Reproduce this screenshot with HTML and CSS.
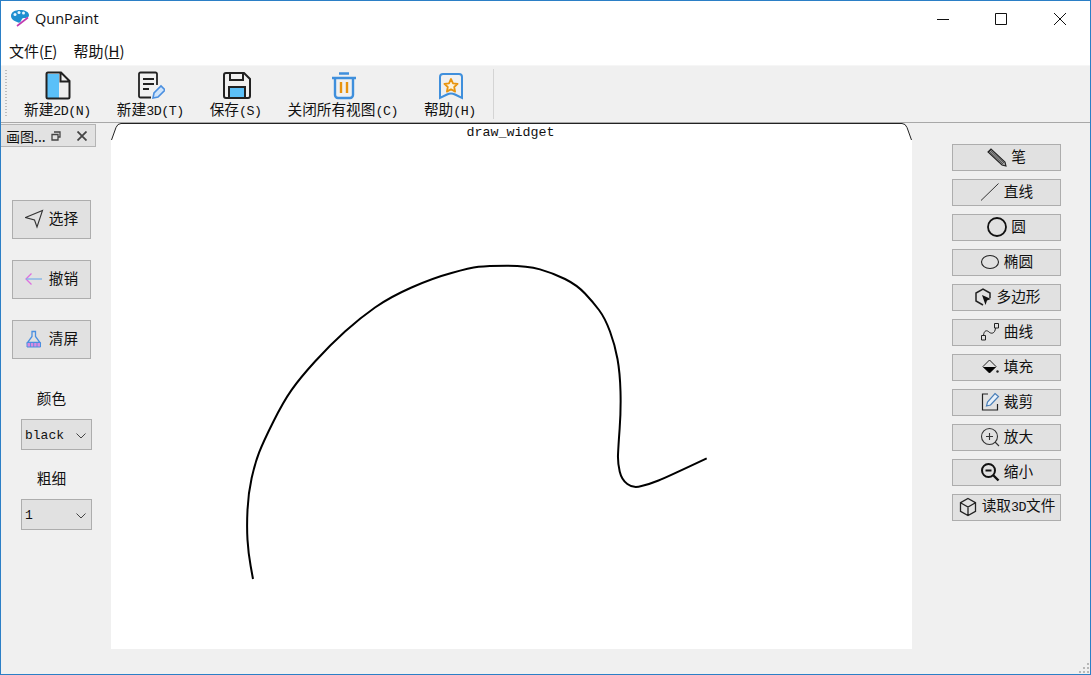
FILE: index.html
```html
<!DOCTYPE html>
<html lang="zh">
<head>
<meta charset="utf-8">
<title>QunPaint</title>
<link rel="stylesheet" href="styles.css">
</head>
<body>
<div class="window">
  <header class="titlebar">
    <svg class="logo" width="20" height="18" viewBox="0 0 20 18">
      <path d="M1 7C1 3 5 1 10 1s9 2 9 5c0 3-3 3-5 3-2 0-2 1-3 3-1 2-2 2-4 1C4 12 1 10 1 7z" fill="#1f8fd0"/>
      <circle cx="5" cy="5.500" r="1.500" fill="#e8f6ff"/><circle cx="9" cy="3.500" r="1.500" fill="#e8f6ff"/><circle cx="13.500" cy="4" r="1.500" fill="#e8f6ff"/>
      <path d="M18 8.500L7 17" stroke="#c23bb0" stroke-width="1.600"/>
    </svg>
    <span class="app-name">QunPaint</span>
    <div class="win-controls">
      <span class="win-btn"><svg width="12" height="12" viewBox="0 0 12 12"><path d="M0 6.500h12" stroke="#111" fill="none"/></svg></span>
      <span class="win-btn"><svg width="12" height="12" viewBox="0 0 12 12"><path d="M.5.500h11v11H.5z" stroke="#111" fill="none"/></svg></span>
      <span class="win-btn"><svg width="12" height="12" viewBox="0 0 12 12"><path d="M0 0l12 12M12 0L0 12" stroke="#111" fill="none"/></svg></span>
    </div>
  </header>

  <nav class="menubar">
    <span class="menu-item">文件(<u>F</u>)</span>
    <span class="menu-item">帮助(<u>H</u>)</span>
  </nav>

  <div class="toolbar">
    <span class="grip"></span>
    <div class="tool">
      <svg width="28" height="29" viewBox="0 0 28 29">
        <path d="M3 3h12v25H5a2 2 0 0 1-2-2z" fill="#5bc0f8"/>
        <path d="M4 1.500h13l8.500 8.500v16a1.500 1.500 0 0 1-1.500 1.500H4A1.500 1.500 0 0 1 2.500 26V3A1.500 1.500 0 0 1 4 1.500zM16.500 2v8.500H25" fill="none" stroke="#222" stroke-width="2"/>
      </svg>
      <span class="tool-label">新建<span class="latin">2D(N)</span></span>
    </div>
    <div class="tool">
      <svg width="28" height="29" viewBox="0 0 28 29">
        <path d="M20 14V3a1.500 1.500 0 0 0-1.500-1.500h-15A1.500 1.500 0 0 0 2 3v22a1.500 1.500 0 0 0 1.500 1.500H14" fill="none" stroke="#222" stroke-width="1.800"/>
        <path d="M6 8h11M6 13h11M6 18h6" stroke="#222" stroke-width="1.800"/>
        <path d="M16 27l1-5 7-7 4 4-7 7z" fill="#cfe4fb" stroke="#4a8fe0" stroke-width="1.600"/>
      </svg>
      <span class="tool-label">新建<span class="latin">3D(T)</span></span>
    </div>
    <div class="tool">
      <svg width="28" height="29" viewBox="0 0 28 29">
        <path d="M3 2h18l6 6v17a2 2 0 0 1-2 2H3a2 2 0 0 1-2-2V4a2 2 0 0 1 2-2z" fill="none" stroke="#222" stroke-width="2"/>
        <path d="M7 2v7h13V2" fill="none" stroke="#222" stroke-width="2"/>
        <path d="M6 16h16v11H6z" fill="#5bc0f8" stroke="#222" stroke-width="2"/>
      </svg>
      <span class="tool-label">保存<span class="latin">(S)</span></span>
    </div>
    <div class="tool">
      <svg width="28" height="29" viewBox="0 0 28 29">
        <path d="M2 7h24M9 2.500h10" stroke="#3f8fdc" stroke-width="2.400" fill="none"/>
        <path d="M5 7v17a3 3 0 0 0 3 3h12a3 3 0 0 0 3-3V7" stroke="#3f8fdc" stroke-width="2.400" fill="none"/>
        <path d="M11 11v11M17 11v11" stroke="#e8940f" stroke-width="2.400"/>
      </svg>
      <span class="tool-label">关闭所有视图<span class="latin">(C)</span></span>
    </div>
    <div class="tool">
      <svg width="28" height="29" viewBox="0 0 28 29">
        <path d="M6 3h16a3 3 0 0 1 3 3v21l-7-3.500a9 9 0 0 0-8 0L3 27V6a3 3 0 0 1 3-3z" fill="none" stroke="#3f8fdc" stroke-width="2"/>
        <path d="M14 8l2 4.300 4.600.6-3.400 3.100.9 4.600-4.100-2.300-4.100 2.300.9-4.600-3.400-3.100 4.600-.6z" fill="#fdf3dc" stroke="#e8940f" stroke-width="1.800" stroke-linejoin="round"/>
      </svg>
      <span class="tool-label">帮助<span class="latin">(H)</span></span>
    </div>
    <span class="tool-sep"></span>
  </div>

  <main class="workspace">
    <aside class="dock">
      <div class="dock-tab">
        <span class="dock-title">画图...</span>
        <svg class="dock-float" width="10" height="10" viewBox="0 0 10 10"><path d="M3 1h6v5H7M1 3.500h6v5.500H1z" fill="none" stroke="#444" stroke-width="1.300"/></svg>
        <svg class="dock-close" width="10" height="10" viewBox="0 0 10 10"><path d="M.5.500l9 9M9.500.500l-9 9" stroke="#444" stroke-width="1.800"/></svg>
      </div>
      <div class="action-list">
        <button class="btn action">
          <svg width="20" height="20" viewBox="0 0 20 20"><path d="M.5 8.500L17.500 1.500 12 18l-2.500-7z" fill="none" stroke="#333" stroke-width="1.100"/></svg>
          <span class="btn-text">选择</span>
        </button>
        <button class="btn action">
          <svg width="20" height="20" viewBox="0 0 20 20"><path d="M6.500 4.500L1 10l5.500 5.500" fill="none" stroke="#dd6fe0" stroke-width="1.300"/><path d="M1 10H17" stroke="#7db2e8" stroke-width="1.300"/></svg>
          <span class="btn-text">撤销</span>
        </button>
        <button class="btn action">
          <svg width="20" height="20" viewBox="0 0 20 20"><path d="M7 2.500h3.500v5l4.500 6H2.500l4.500-6z" fill="none" stroke="#4a8fe0" stroke-width="1.300"/><path d="M2 13.500h13.500v4.500H2z" fill="#d98ae0" stroke="#4a8fe0"/><path d="M5.500 14v4M8.700 14v4M12 14v4" stroke="#4a8fe0" stroke-width=".8"/></svg>
          <span class="btn-text">清屏</span>
        </button>
      </div>
      <label class="field-label first">颜色</label>
      <div class="combo"><span class="combo-value">black</span>
        <svg width="10" height="6" viewBox="0 0 10 6"><path d="M.5.500L5 5 9.500.500" fill="none" stroke="#444"/></svg></div>
      <label class="field-label">粗细</label>
      <div class="combo"><span class="combo-value">1</span>
        <svg width="10" height="6" viewBox="0 0 10 6"><path d="M.5.500L5 5 9.500.500" fill="none" stroke="#444"/></svg></div>
    </aside>

    <section class="canvas-area">
      <svg class="tab-shape" width="801" height="18" viewBox="0 0 801 18">
        <path d="M.5 17L5 4.500Q6.500.500 10 .500H791Q794.500.500 796 4.500L800.500 17" fill="#fff" stroke="#222"/>
      </svg>
      <div class="canvas-title">draw_widget</div>
      <svg class="drawing" width="801" height="526" viewBox="111 123 801 526">
        <path fill="none" stroke="#000" stroke-width="2" d="M253 579L250.650 566Q248.300 553 247.500 539.850Q246.700 526.700 247.500 509.850Q248.300 493 251.650 478Q255 463 259.150 452.350Q263.300 441.700 273.300 421.700Q283.300 401.700 291.650 389.850Q300 378 315 361.500Q330 345 345 331.500Q360 318 375 307.500Q390 297 411.500 287.500Q433 278 451.500 273Q470 268 478.500 266.850Q487 265.700 507 265.700Q527 265.700 540 269.350Q553 273 565 279Q577 285 585 293.500Q593 302 599 310Q605 318 610 331.500Q615 345 617.500 359Q620 373 620.500 391.500Q621 410 619.650 428.500Q618.300 447 618 455Q617.700 463 619.700 471.500Q621.700 480 627.350 484Q633 488.500 641.500 486Q650 484 658.500 480.500Q667 477 706.700 458.300"/>
      </svg>
    </section>

    <aside class="tools">
      <button class="btn shape">
        <svg width="20" height="20" viewBox="0 0 20 20"><path d="M1 5l3-3 14 13 1 4-4-1z" fill="#aaa" stroke="#222" stroke-width="1.100"/><path d="M3 3l14 13M2 4l14 13" stroke="#222" stroke-width=".7"/></svg>
        <span class="btn-text">笔</span>
      </button>
      <button class="btn shape">
        <svg width="20" height="20" viewBox="0 0 20 20"><path d="M1 18.500L18.500 1.500" stroke="#333"/></svg>
        <span class="btn-text">直线</span>
      </button>
      <button class="btn shape">
        <svg width="20" height="20" viewBox="0 0 20 20"><circle cx="10" cy="10" r="9" fill="none" stroke="#111" stroke-width="1.800"/></svg>
        <span class="btn-text">圆</span>
      </button>
      <button class="btn shape">
        <svg width="20" height="20" viewBox="0 0 20 20"><ellipse cx="10" cy="10" rx="8.500" ry="6.500" fill="none" stroke="#222" stroke-width="1.100"/></svg>
        <span class="btn-text">椭圆</span>
      </button>
      <button class="btn shape">
        <svg width="20" height="20" viewBox="0 0 20 20"><path d="M10 18l-7-4V6l7-4 7 4v5" fill="none" stroke="#222" stroke-width="1.500"/><path d="M9 8l9 4-4 1.500L12.500 18z" fill="#111"/></svg>
        <span class="btn-text">多边形</span>
      </button>
      <button class="btn shape">
        <svg width="20" height="20" viewBox="0 0 20 20"><path d="M1.500 13.500h4v4.500h-4zM14.500 1.500h4v4.500h-4z" fill="none" stroke="#222"/><path d="M3.500 13.500C4 8 7 8 9 10s6 2 6.500-4" fill="none" stroke="#222"/></svg>
        <span class="btn-text">曲线</span>
      </button>
      <button class="btn shape">
        <svg width="20" height="20" viewBox="0 0 20 20"><path d="M9.500 3L16 9.500 9.500 16 3 9.500z" fill="none" stroke="#222"/><path d="M3 10h13l-6.500 6z" fill="#000"/><circle cx="17.500" cy="14.500" r="1.200" fill="#222"/></svg>
        <span class="btn-text">填充</span>
      </button>
      <button class="btn shape">
        <svg width="20" height="20" viewBox="0 0 20 20"><path d="M8 2H2.500v16h15v-6" fill="none" stroke="#222" stroke-width="1.200"/><path d="M15 1.500l3.500 3-8 8.500-4 1 1-4z" fill="#e9f2fb" stroke="#4a7fb8" stroke-width="1.200"/></svg>
        <span class="btn-text">裁剪</span>
      </button>
      <button class="btn shape">
        <svg width="20" height="20" viewBox="0 0 20 20"><circle cx="9.500" cy="9.500" r="8" fill="none" stroke="#333" stroke-width="1.100"/><path d="M9.500 6v7M6 9.500h7M15 15l4 4" stroke="#333" stroke-width="1.100"/></svg>
        <span class="btn-text">放大</span>
      </button>
      <button class="btn shape">
        <svg width="20" height="20" viewBox="0 0 20 20"><circle cx="8.500" cy="8.500" r="6.500" fill="none" stroke="#111" stroke-width="2"/><path d="M5.500 8.500h6" stroke="#111" stroke-width="2"/><path d="M13 13l5.500 5.500" stroke="#111" stroke-width="2.400"/></svg>
        <span class="btn-text">缩小</span>
      </button>
      <button class="btn shape">
        <svg width="20" height="20" viewBox="0 0 20 20"><path d="M10 1.500l7.500 4.200v8.600L10 18.500l-7.500-4.200V5.700zM2.500 5.700L10 10l7.500-4.300M10 10v8.500" fill="none" stroke="#222" stroke-width="1.300"/></svg>
        <span class="btn-text">读取<span class="latin">3D</span>文件</span>
      </button>
    </aside>
  </main>

  <svg class="size-grip" width="12" height="12" viewBox="0 0 12 12">
    <path d="M9 1h2v2H9zM5 5h2v2H5zM9 5h2v2H9zM1 9h2v2H1zM5 9h2v2H5zM9 9h2v2H9z" fill="#b8b8b8"/>
  </svg>
</div>
</body>
</html>
```

FILE: styles.css
```css
* {
  box-sizing: border-box;
}

html,
body {
  margin: 0;
  padding: 0;
  height: 100%;
}

body {
  font-family: "Liberation Mono", "Noto Sans CJK SC", monospace;
  font-size: 14.67px;
  color: #111;
  overflow: hidden;
}

.latin {
  font-size: 13.33px;
  letter-spacing: -0.5px;
}

.window {
  position: relative;
  width: 1091px;
  height: 675px;
  display: flex;
  flex-direction: column;
  border: 1px solid #2b7fc6;
  background: #f0f0f0;
}

.titlebar {
  height: 35px;
  flex: none;
  display: flex;
  align-items: center;
  background: #fff;
  padding-left: 9px;
}

.logo {
  margin-top: -1px;
}

.app-name {
  margin-left: 5px;
  margin-top: -1px;
  font-family: "Open Sans", "Noto Sans", sans-serif;
  font-size: 14.500px;
  color: #111;
}

.win-controls {
  margin-left: auto;
  display: flex;
  margin-right: 1px;
}

.win-btn {
  width: 58.500px;
  height: 34px;
  display: flex;
  align-items: center;
  justify-content: center;
}

.menubar {
  height: 29px;
  flex: none;
  display: flex;
  align-items: center;
  gap: 16px;
  padding-left: 8px;
  background: #fff;
  font-family: "Noto Sans CJK SC", "Noto Sans", sans-serif;
  font-size: 15px;
}

.toolbar {
  height: 58px;
  flex: none;
  display: flex;
  align-items: flex-start;
  background: #f0f0f0;
  border-top: 1px solid #f6f6f6;
  border-bottom: 1px solid #a8a8a8;
  padding-left: 4px;
}

.grip {
  width: 2px;
  height: 48px;
  margin-top: 4px;
  margin-right: 4px;
  background: repeating-linear-gradient(to bottom, #bdbdbd 0 1px, transparent 1px 3px);
}

.tool {
  display: flex;
  flex-direction: column;
  align-items: center;
  padding: 5px 13px 0;
}

.tool svg {
  margin-left: 2px;
}

.tool-label {
  margin-top: 2px;
  line-height: 18px;
  white-space: nowrap;
}

.tool-sep {
  width: 1px;
  height: 50px;
  margin-top: 3px;
  margin-left: 4px;
  background: #d4d4d4;
}

.workspace {
  flex: 1;
  min-height: 0;
  display: flex;
}

.dock {
  width: 110px;
  flex: none;
  display: flex;
  flex-direction: column;
}

.dock-tab {
  width: 95px;
  height: 23px;
  margin-top: 1px;
  display: flex;
  align-items: center;
  background: #e2e2e2;
  border: 1px solid #b4b4b4;
  border-left: 0;
  padding-left: 5px;
}

.dock-title {
  width: 45px;
  white-space: nowrap;
  font-family: "Noto Sans CJK SC", sans-serif;
  font-size: 14px;
}

.dock-close {
  margin-left: 16px;
}

.action-list {
  margin-top: 53px;
  margin-left: 11px;
  display: flex;
  flex-direction: column;
  gap: 21px;
}

.btn {
  display: flex;
  align-items: center;
  justify-content: center;
  gap: 4px;
  padding: 0;
  background: #e1e1e1;
  border: 1px solid #adadad;
  font: inherit;
  color: inherit;
  white-space: nowrap;
}

.btn svg {
  margin-top: -1px;
}

.btn-text {
  line-height: 20px;
}

.action {
  width: 79px;
  height: 39px;
}

.field-label {
  width: 79px;
  margin-left: 11px;
  text-align: center;
  line-height: 20px;
  margin-top: 20px;
  margin-bottom: 9px;
}

.field-label.first {
  margin-top: 31px;
}

.combo {
  width: 71px;
  height: 31px;
  margin-left: 20px;
  display: flex;
  align-items: center;
  justify-content: space-between;
  padding: 2px 5px 0 3px;
  background: #e1e1e1;
  border: 1px solid #adadad;
}

.combo-value {
  font-size: 13px;
}

.canvas-area {
  position: relative;
  width: 801px;
  height: 526px;
  flex: none;
  background: linear-gradient(to bottom, transparent 17px, #fff 17px);
}

.tab-shape {
  position: absolute;
  left: 0;
  top: 0;
  display: block;
}

.canvas-title {
  position: absolute;
  left: 0;
  right: 2px;
  top: 2px;
  text-align: center;
  font-size: 13.33px;
  line-height: 15px;
}

.drawing {
  display: block;
  position: absolute;
  left: 0;
  top: 0;
}

.tools {
  flex: 1;
  display: flex;
  flex-direction: column;
  gap: 8px;
  padding: 21px 0 0 40px;
}

.shape {
  width: 109px;
  height: 27px;
}

.size-grip {
  position: absolute;
  right: 0;
  bottom: 0;
}
```
